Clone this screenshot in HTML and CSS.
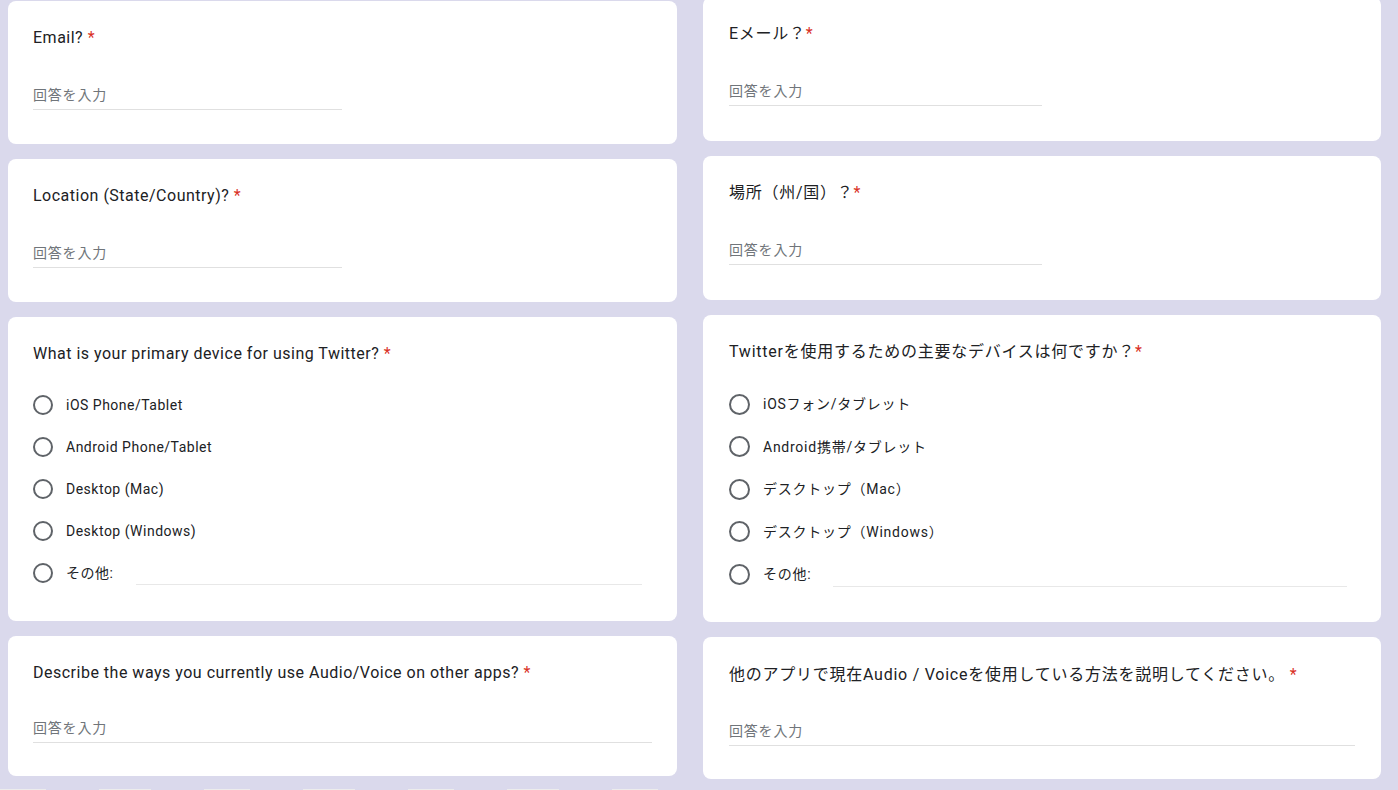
FILE: index.html
```html
<!DOCTYPE html>
<html lang="ja">
<head>
<meta charset="utf-8">
<title>Form</title>
<link rel="stylesheet" href="styles.css">
</head>
<body>
<div class="page">
  <div class="col col-left">
    <section class="card">
      <div class="q-title">Email? <span class="req">*</span></div>
      <div class="answer short"><span class="ph">回答を入力</span></div>
    </section>
    <section class="card">
      <div class="q-title">Location (State/Country)? <span class="req">*</span></div>
      <div class="answer short"><span class="ph">回答を入力</span></div>
    </section>
    <section class="card card-choice">
      <div class="q-title">What is your primary device for using Twitter? <span class="req">*</span></div>
      <div class="options">
        <div class="opt"><span class="radio"></span><span class="label">iOS Phone/Tablet</span></div>
        <div class="opt"><span class="radio"></span><span class="label">Android Phone/Tablet</span></div>
        <div class="opt"><span class="radio"></span><span class="label">Desktop (Mac)</span></div>
        <div class="opt"><span class="radio"></span><span class="label">Desktop (Windows)</span></div>
        <div class="opt"><span class="radio"></span><span class="label other-label">その他:</span><span class="other-input"></span></div>
      </div>
    </section>
    <section class="card card-last">
      <div class="q-title">Describe the ways you currently use Audio/Voice on other apps? <span class="req">*</span></div>
      <div class="answer long"><span class="ph">回答を入力</span></div>
    </section>
    <div class="strip"></div>
  </div>
  <div class="col col-right">
    <section class="card">
      <div class="q-title">Eメール？<span class="req">*</span></div>
      <div class="answer short"><span class="ph">回答を入力</span></div>
    </section>
    <section class="card">
      <div class="q-title">場所（州/国）？<span class="req">*</span></div>
      <div class="answer short"><span class="ph">回答を入力</span></div>
    </section>
    <section class="card card-choice">
      <div class="q-title">Twitterを使用するための主要なデバイスは何ですか？<span class="req">*</span></div>
      <div class="options">
        <div class="opt"><span class="radio"></span><span class="label">iOSフォン/タブレット</span></div>
        <div class="opt"><span class="radio"></span><span class="label">Android携帯/タブレット</span></div>
        <div class="opt"><span class="radio"></span><span class="label">デスクトップ（Mac）</span></div>
        <div class="opt"><span class="radio"></span><span class="label">デスクトップ（Windows）</span></div>
        <div class="opt"><span class="radio"></span><span class="label other-label">その他:</span><span class="other-input"></span></div>
      </div>
    </section>
    <section class="card card-last">
      <div class="q-title">他のアプリで現在Audio / Voiceを使用している方法を説明してください。 <span class="req">*</span></div>
      <div class="answer long"><span class="ph">回答を入力</span></div>
    </section>
    <div class="strip"></div>
  </div>
</div>
</body>
</html>
```

FILE: styles.css
```css
* { box-sizing: border-box; }

html, body {
  margin: 0;
  padding: 0;
  background: #dad9ec;
}

body {
  font-family: Roboto, "Noto Sans CJK JP", "Noto Sans", sans-serif;
  color: #202124;
}

.page {
  display: flex;
  gap: 26px;
  padding-left: 8px;
  height: 790px;
  overflow: hidden;
  background: #dad9ec;
}

.col {
  display: flex;
  flex-direction: column;
  gap: 15px;
  flex: none;
}

.col-left {
  width: 669px;
  padding-top: 1px;
}

.col-right {
  width: 678px;
  margin-top: -3px;
}

.card {
  background: #ffffff;
  border-radius: 8px;
  padding: 25px 25px 34px 25px;
  display: flex;
  flex-direction: column;
}

.col-right .card {
  padding-left: 26px;
  padding-right: 26px;
  padding-bottom: 35px;
}

.q-title {
  font-size: 16px;
  line-height: 24px;
  letter-spacing: 0.5px;
  color: #202124;
  white-space: nowrap;
}
.col-right .q-title { letter-spacing: 0.75px; }

.req {
  color: #d93025;
}

.answer {
  margin-top: 35px;
  padding-bottom: 4px;
  border-bottom: 1px solid #e0e0e0;
  font-size: 14px;
  line-height: 20px;
}

.answer.short { width: 309px; }
.col-right .answer.short { width: 313px; }

.answer.long { width: 100%; }

.ph {
  color: #70757a;
  letter-spacing: 0.8px;
}

.card-last {
  padding-bottom: 33px;
}
.card-last .answer { margin-top: 33px; }

.col-right .card-last {
  padding-top: 26px;
  padding-bottom: 33px;
}
.col-right .card-last .answer { margin-top: 34px; }

.card-choice {
  padding-bottom: 27px;
}
.col-right .card-choice {
  padding-bottom: 26.5px;
}

.options {
  margin-top: 18px;
  display: flex;
  flex-direction: column;
}
.col-right .options { margin-top: 19px; }

.opt {
  height: 42px;
  display: flex;
  align-items: center;
}
.col-right .opt { height: 42.5px; }

.radio {
  width: 20px;
  height: 20px;
  border: 2px solid #5f6368;
  border-radius: 50%;
  flex: none;
}
.col-right .radio { width: 21px; height: 21px; }

.label {
  margin-left: 13px;
  font-size: 14px;
  line-height: 20px;
  letter-spacing: 0.5px;
  color: #202124;
  white-space: nowrap;
}
.col-right .label { margin-left: 13px; letter-spacing: 0.75px; }

.other-label {
  width: 70px;
  flex: none;
}

.other-input {
  flex: 1;
  height: 24px;
  margin-right: 10px;
  border-bottom: 1px solid #e8e8e8;
}
.col-right .other-input { margin-right: 8px; height: 25px; }

.strip {
  height: 2px;
  margin-top: -2px;
  margin-left: -8px;
  flex: none;
  background: repeating-linear-gradient(90deg, #ececec 0 46px, #dad9ec 46px 99px, #ececec 99px 151px, #dad9ec 151px 204px);
}
```
